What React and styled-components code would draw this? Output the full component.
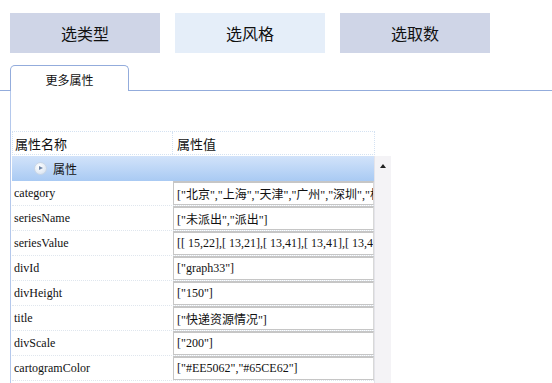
import React from "react";
import styled, { createGlobalStyle } from "styled-components";

const Global = createGlobalStyle`
  html, body { margin: 0; padding: 0; background: #fff; }
  body { font-family: "Liberation Sans", "Noto Sans CJK SC", sans-serif; }
`;

const Page = styled.div`
  width: 552px;
  height: 383px;
  overflow: hidden;
`;

const ButtonRow = styled.div`
  display: flex;
  gap: 15px;
  padding: 13px 10px 0;
`;

const TypeButton = styled.div`
  width: 150px;
  height: 40px;
  display: flex;
  align-items: center;
  justify-content: center;
  font-size: 16px;
  color: #111;
  font-family: "Noto Sans CJK SC", sans-serif;
  background: ${(p) => (p.$active ? "#e5eef9" : "#cfd5e7")};
`;

const TabStrip = styled.div`
  margin-top: 12px;
  padding-left: 10px;
  height: 25px;
  border-bottom: 1px solid #93acdc;
  display: flex;
  align-items: flex-end;
`;

const Tab = styled.div`
  width: 119px;
  height: 26px;
  box-sizing: border-box;
  border: 1px solid #93acdc;
  border-bottom: none;
  border-radius: 5px 5px 0 0;
  background: #fff;
  margin-bottom: -1px;
  display: flex;
  justify-content: center;
  padding-top: 5px;
  font-size: 12px;
  font-family: "Noto Sans CJK SC", sans-serif;
  color: #111;
`;

const Panel = styled.div`
  margin-left: 10px;
  border-left: 1px solid #b4c8ec;
  padding: 40px 0 0 1px;
  height: 300px;
`;

const HeaderRow = styled.div`
  display: grid;
  grid-template-columns: 160px 203px;
  width: 363px;
  height: 24px;
  border: 1px dotted #d4e2f2;
  box-sizing: border-box;
`;

const HeaderCell = styled.div`
  display: flex;
  align-items: center;
  padding-left: ${(p) => p.$pad || 2}px;
  font-size: 13px;
  font-family: "Noto Sans CJK SC", sans-serif;
  color: #111;
  border-right: ${(p) => (p.$sep ? "1px dotted #d4e2f2" : "none")};
`;

const Body = styled.div`
  display: flex;
  margin-top: 1px;
`;

const Rows = styled.div`
  width: 362px;
`;

const GroupRow = styled.div`
  height: 25px;
  display: flex;
  align-items: center;
  padding-left: 22px;
  gap: 6px;
  background: linear-gradient(#d2e3fa, #a9caf3);
  font-size: 12px;
  font-family: "Noto Sans CJK SC", sans-serif;
  color: #111;
  box-sizing: border-box;
`;

const Expander = styled.span`
  width: 11px;
  height: 11px;
  border-radius: 50%;
  background: radial-gradient(circle at 40% 35%, #ffffff, #dfe8f3 70%, #b9c9dc);
  border: 1px solid #c9d6e6;
  position: relative;
  &::after {
    content: "";
    position: absolute;
    left: 4px;
    top: 3px;
    border-left: 4px solid #6f86a8;
    border-top: 2.5px solid transparent;
    border-bottom: 2.5px solid transparent;
  }
`;

const Row = styled.div`
  display: grid;
  grid-template-columns: 160px 202px;
  height: 25px;
  border-bottom: 1px dotted #dfe6ee;
  box-sizing: border-box;
`;

const NameCell = styled.div`
  display: flex;
  align-items: center;
  padding-left: 2px;
  padding-top: 1px;
  font-family: "Liberation Serif", "Noto Sans CJK SC", serif;
  font-size: 12px;
  color: #111;
`;

const ValueCell = styled.div`
  padding: 0 0 0 1px;
  display: flex;
`;

const ValueBox = styled.div`
  flex: 1;
  box-sizing: border-box;
  background: #fff;
  border: 1px solid #c6c6c6;
  border-top: 2px solid #c6c6c6;
  border-right: 1px solid #d8d8d8;
  display: flex;
  align-items: center;
  padding-left: 3px;
  overflow: hidden;
  white-space: nowrap;
  font-family: "Liberation Serif", "Noto Sans CJK SC", serif;
  font-size: 12px;
  color: #111;
`;

const Scrollbar = styled.div`
  width: 17px;
  height: 230px;
  background: #f4f3f6;
  border-left: 1px solid #e4e4ea;
  box-sizing: border-box;
  position: relative;
  &::before {
    content: "";
    position: absolute;
    left: 5px;
    top: 8px;
    border-bottom: 4px solid #222;
    border-left: 3.5px solid transparent;
    border-right: 3.5px solid transparent;
  }
`;

const rows = [
  ["category", '["北京","上海","天津","广州","深圳","杭州"]'],
  ["seriesName", '["未派出","派出"]'],
  ["seriesValue", "[[ 15,22],[ 13,21],[ 13,41],[ 13,41],[ 13,41]]"],
  ["divId", '["graph33"]'],
  ["divHeight", '["150"]'],
  ["title", '["快递资源情况"]'],
  ["divScale", '["200"]'],
  ["cartogramColor", '["#EE5062","#65CE62"]'],
];

export default function App() {
  return (
    <Page>
      <Global />
      <ButtonRow>
        <TypeButton>选类型</TypeButton>
        <TypeButton $active>选风格</TypeButton>
        <TypeButton>选取数</TypeButton>
      </ButtonRow>
      <TabStrip>
        <Tab>更多属性</Tab>
      </TabStrip>
      <Panel>
        <HeaderRow>
          <HeaderCell $sep>属性名称</HeaderCell>
          <HeaderCell $pad={4}>属性值</HeaderCell>
        </HeaderRow>
        <Body>
          <Rows>
            <GroupRow>
              <Expander />
              属性
            </GroupRow>
            {rows.map(([k, v]) => (
              <Row key={k}>
                <NameCell>{k}</NameCell>
                <ValueCell>
                  <ValueBox>{v}</ValueBox>
                </ValueCell>
              </Row>
            ))}
          </Rows>
          <Scrollbar />
        </Body>
      </Panel>
    </Page>
  );
}
